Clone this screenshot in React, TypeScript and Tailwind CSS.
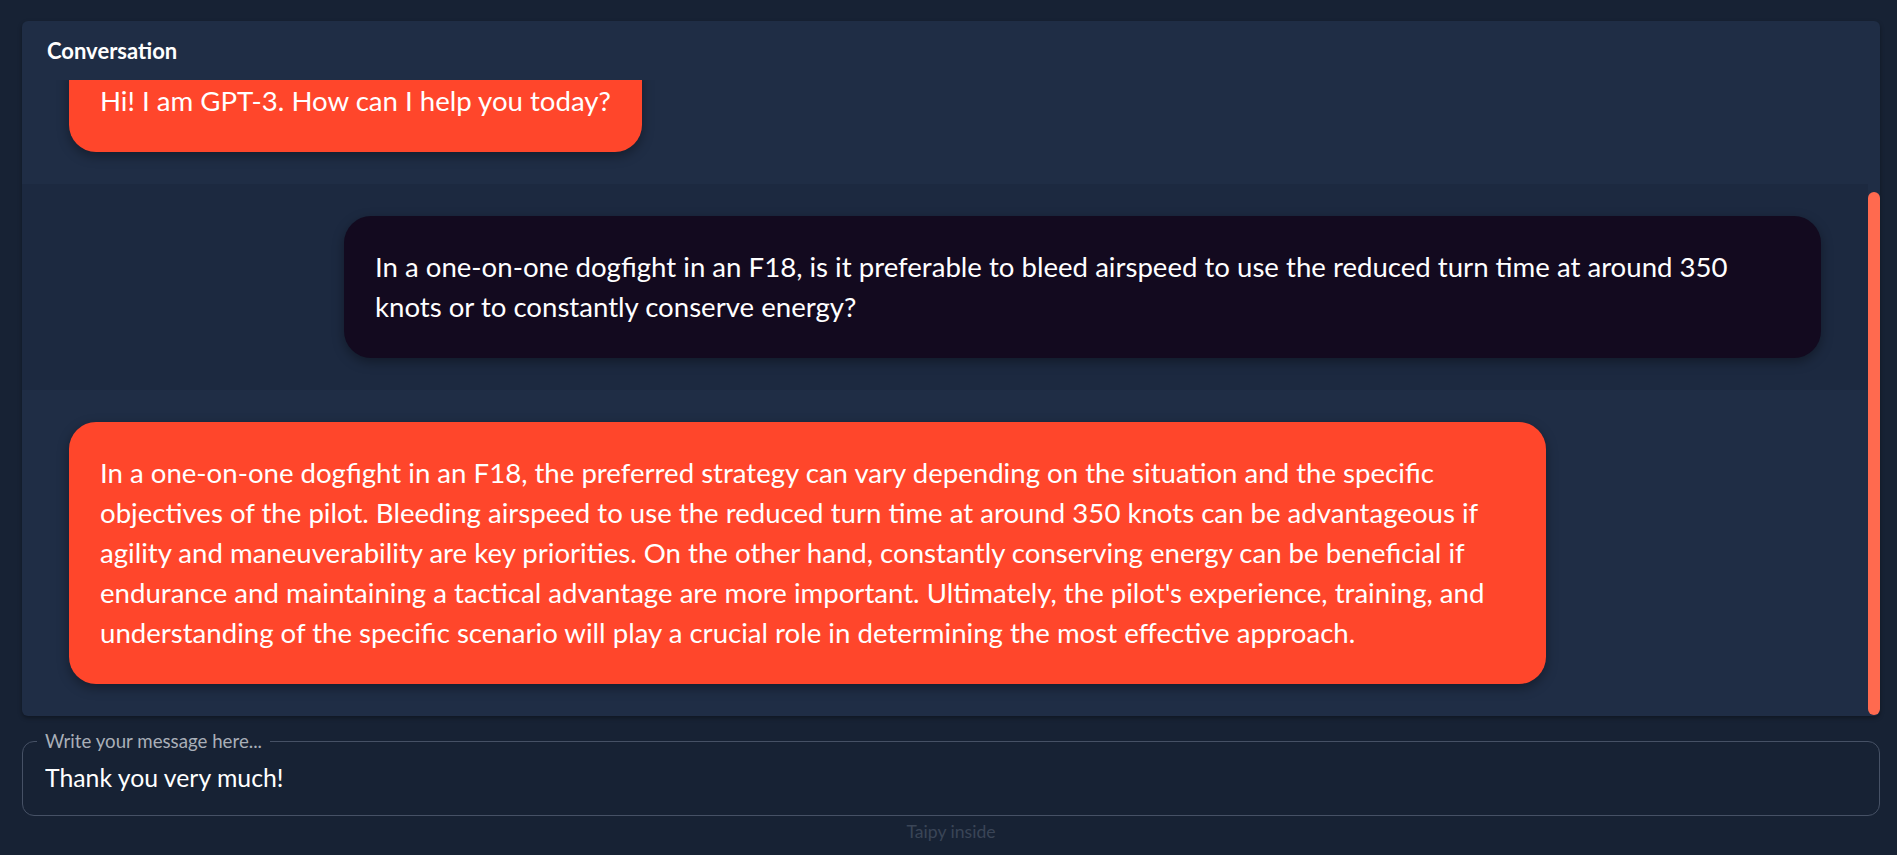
import { useState } from "react";

type Message = { id: number; sender: "taipy" | "user"; lines: string[] };

// lines are kept as the reference breaks them
const messages: Message[] = [
  { id: 1, sender: "taipy", lines: ["Hi! I am GPT-3. How can I help you today?"] },
  {
    id: 2,
    sender: "user",
    lines: [
      "In a one-on-one dogfight in an F18, is it preferable to bleed airspeed to use the reduced turn time at around 350",
      "knots or to constantly conserve energy?",
    ],
  },
  {
    id: 3,
    sender: "taipy",
    lines: [
      "In a one-on-one dogfight in an F18, the preferred strategy can vary depending on the situation and the specific",
      "objectives of the pilot. Bleeding airspeed to use the reduced turn time at around 350 knots can be advantageous if",
      "agility and maneuverability are key priorities. On the other hand, constantly conserving energy can be beneficial if",
      "endurance and maintaining a tactical advantage are more important. Ultimately, the pilot's experience, training, and",
      "understanding of the specific scenario will play a crucial role in determining the most effective approach.",
    ],
  },
];

const Bubble = ({ msg }: { msg: Message }) => {
  const isUser = msg.sender === "user";
  const wrapped = msg.lines.length > 1;
  return (
    <div className={`flex px-[47px] py-[32px] ${isUser ? "justify-end bg-[#1c2940]" : "justify-start"}`}>
      <div
        className={`overflow-hidden rounded-[27px] px-[31px] py-[31px] text-[27.6px] leading-[40px] shadow-[0_4px_12px_rgba(0,0,0,0.35)] ${
          wrapped ? "w-[1477px]" : ""
        } ${isUser ? "bg-[#130a1f]" : "bg-[#ff462b]"}`}
      >
        {msg.lines.map((line, i) => (
          <span key={i} className="block whitespace-nowrap">
            {line}
          </span>
        ))}
      </div>
    </div>
  );
};

export default function App() {
  const [draft, setDraft] = useState("Thank you very much!");

  return (
    <div className="h-screen overflow-hidden bg-[#172234] pt-[21px] pl-[22px] pr-[17px] font-['Lato',sans-serif] text-white">
      {/* Conversation panel */}
      <div className="flex h-[695px] overflow-hidden rounded-[6px] bg-[#1f2d45] shadow-[0_2px_4px_rgba(0,0,0,0.35)]">
        <div className="flex min-w-0 flex-1 flex-col">
          <div className="h-[59px] shrink-0 pl-[25px] pt-[16px] text-[22px] font-bold leading-[28px]">Conversation</div>
          <div className="min-h-0 flex-1 overflow-hidden">
            <div className="-mt-[62px]">
              {messages.map((m) => (
                <Bubble key={m.id} msg={m} />
              ))}
            </div>
          </div>
        </div>
        {/* scroll track */}
        <div className="w-[12px] shrink-0">
          <div className="mt-[171px] h-[523px] rounded-full bg-[#ff6a4f]" />
        </div>
      </div>

      {/* Message input */}
      <fieldset className="mt-[16px] rounded-[12px] border border-[#465165] px-[22px] pb-[17px] pt-[8px]">
        <legend className="ml-[-8px] px-[8px] text-[18.7px] leading-[18px] text-[#a9afb8]">
          Write your message here...
        </legend>
        <input
          value={draft}
          onChange={(e) => setDraft(e.target.value)}
          className="block h-[40px] w-full bg-transparent text-[24.8px] leading-[40px] text-white outline-none"
        />
      </fieldset>

      <div className="mt-[4px] text-center text-[17.6px] leading-[24px] text-[#3a4557]">Taipy inside</div>
    </div>
  );
}
